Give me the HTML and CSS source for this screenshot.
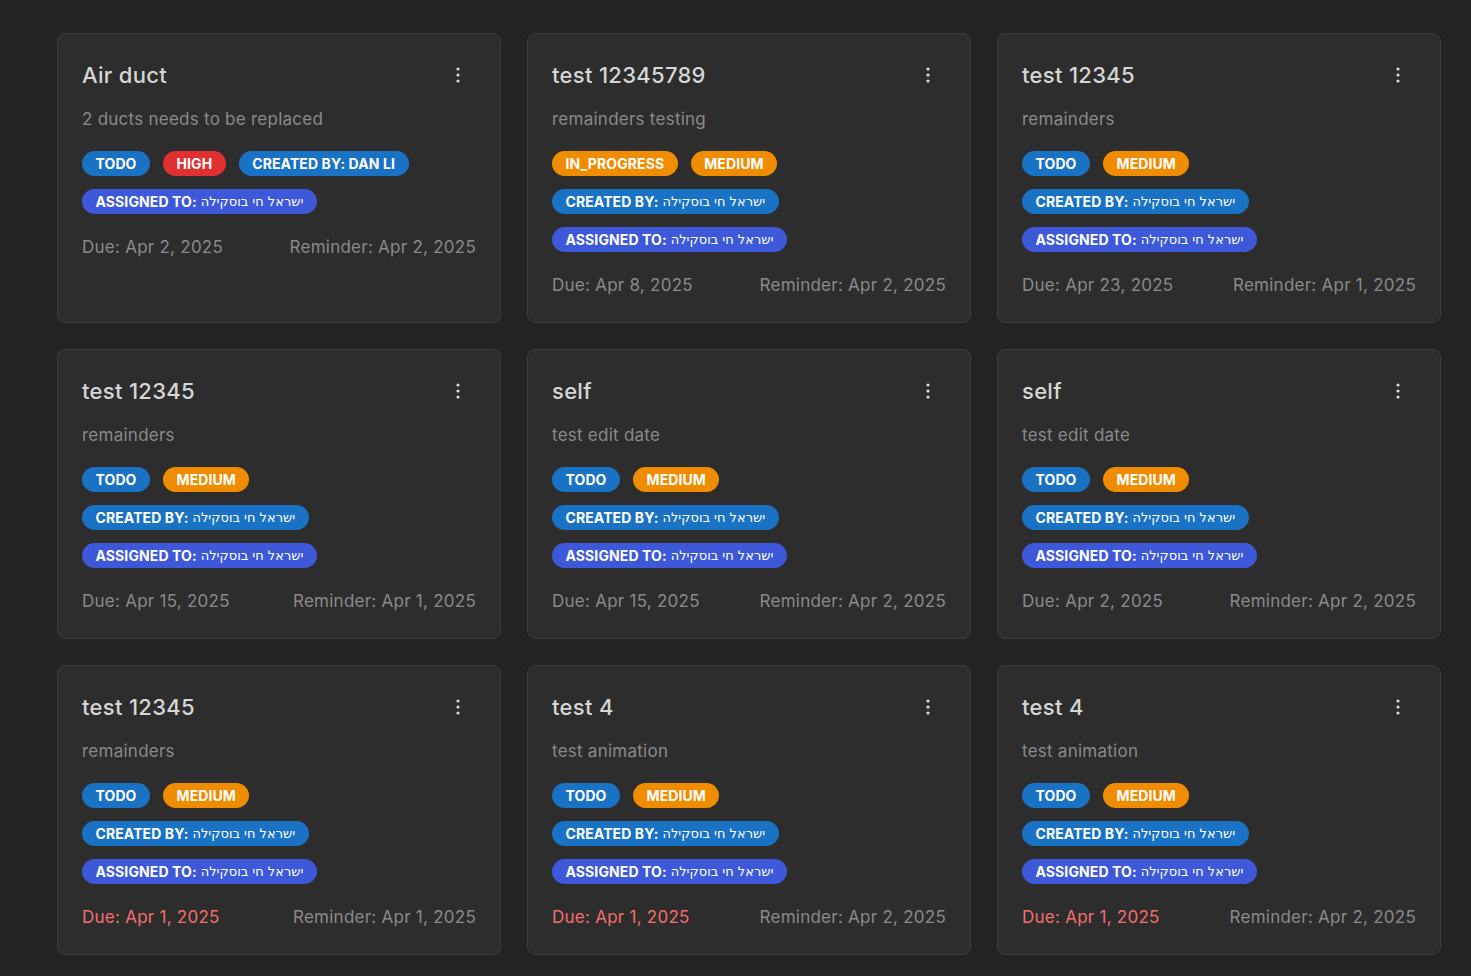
FILE: index.html
```html
<!DOCTYPE html>
<html lang="en">
<head>
<meta charset="utf-8">
<title>Tasks</title>
<link rel="stylesheet" href="styles.css">
</head>
<body>
<main class="grid">
  <article class="card">
    <header class="card-head"><h2 class="title">Air duct</h2><button class="menu" aria-label="menu"><svg width="4" height="16" viewBox="0 0 4 16"><circle cx="2" cy="2" r="1.6"/><circle cx="2" cy="8" r="1.6"/><circle cx="2" cy="14" r="1.6"/></svg></button></header>
    <p class="desc">2 ducts needs to be replaced</p>
    <div class="chips">
      <span class="chip blue">TODO</span><span class="chip red">HIGH</span><span class="chip blue">CREATED BY: DAN LI</span>
      <span class="chip indigo">ASSIGNED TO: <span class="he">ישראל חי בוסקילה</span></span>
    </div>
    <div class="dates"><span>Due: Apr 2, 2025</span><span>Reminder: Apr 2, 2025</span></div>
  </article>

  <article class="card">
    <header class="card-head"><h2 class="title">test 12345789</h2><button class="menu" aria-label="menu"><svg width="4" height="16" viewBox="0 0 4 16"><circle cx="2" cy="2" r="1.6"/><circle cx="2" cy="8" r="1.6"/><circle cx="2" cy="14" r="1.6"/></svg></button></header>
    <p class="desc">remainders testing</p>
    <div class="chips">
      <span class="chip orange">IN_PROGRESS</span><span class="chip orange">MEDIUM</span>
      <span class="chip blue">CREATED BY: <span class="he">ישראל חי בוסקילה</span></span>
      <span class="chip indigo">ASSIGNED TO: <span class="he">ישראל חי בוסקילה</span></span>
    </div>
    <div class="dates"><span>Due: Apr 8, 2025</span><span>Reminder: Apr 2, 2025</span></div>
  </article>

  <article class="card">
    <header class="card-head"><h2 class="title">test 12345</h2><button class="menu" aria-label="menu"><svg width="4" height="16" viewBox="0 0 4 16"><circle cx="2" cy="2" r="1.6"/><circle cx="2" cy="8" r="1.6"/><circle cx="2" cy="14" r="1.6"/></svg></button></header>
    <p class="desc">remainders</p>
    <div class="chips">
      <span class="chip blue">TODO</span><span class="chip orange">MEDIUM</span>
      <span class="chip blue">CREATED BY: <span class="he">ישראל חי בוסקילה</span></span>
      <span class="chip indigo">ASSIGNED TO: <span class="he">ישראל חי בוסקילה</span></span>
    </div>
    <div class="dates"><span>Due: Apr 23, 2025</span><span>Reminder: Apr 1, 2025</span></div>
  </article>

  <article class="card">
    <header class="card-head"><h2 class="title">test 12345</h2><button class="menu" aria-label="menu"><svg width="4" height="16" viewBox="0 0 4 16"><circle cx="2" cy="2" r="1.6"/><circle cx="2" cy="8" r="1.6"/><circle cx="2" cy="14" r="1.6"/></svg></button></header>
    <p class="desc">remainders</p>
    <div class="chips">
      <span class="chip blue">TODO</span><span class="chip orange">MEDIUM</span>
      <span class="chip blue">CREATED BY: <span class="he">ישראל חי בוסקילה</span></span>
      <span class="chip indigo">ASSIGNED TO: <span class="he">ישראל חי בוסקילה</span></span>
    </div>
    <div class="dates"><span>Due: Apr 15, 2025</span><span>Reminder: Apr 1, 2025</span></div>
  </article>

  <article class="card">
    <header class="card-head"><h2 class="title">self</h2><button class="menu" aria-label="menu"><svg width="4" height="16" viewBox="0 0 4 16"><circle cx="2" cy="2" r="1.6"/><circle cx="2" cy="8" r="1.6"/><circle cx="2" cy="14" r="1.6"/></svg></button></header>
    <p class="desc">test edit date</p>
    <div class="chips">
      <span class="chip blue">TODO</span><span class="chip orange">MEDIUM</span>
      <span class="chip blue">CREATED BY: <span class="he">ישראל חי בוסקילה</span></span>
      <span class="chip indigo">ASSIGNED TO: <span class="he">ישראל חי בוסקילה</span></span>
    </div>
    <div class="dates"><span>Due: Apr 15, 2025</span><span>Reminder: Apr 2, 2025</span></div>
  </article>

  <article class="card">
    <header class="card-head"><h2 class="title">self</h2><button class="menu" aria-label="menu"><svg width="4" height="16" viewBox="0 0 4 16"><circle cx="2" cy="2" r="1.6"/><circle cx="2" cy="8" r="1.6"/><circle cx="2" cy="14" r="1.6"/></svg></button></header>
    <p class="desc">test edit date</p>
    <div class="chips">
      <span class="chip blue">TODO</span><span class="chip orange">MEDIUM</span>
      <span class="chip blue">CREATED BY: <span class="he">ישראל חי בוסקילה</span></span>
      <span class="chip indigo">ASSIGNED TO: <span class="he">ישראל חי בוסקילה</span></span>
    </div>
    <div class="dates"><span>Due: Apr 2, 2025</span><span>Reminder: Apr 2, 2025</span></div>
  </article>

  <article class="card">
    <header class="card-head"><h2 class="title">test 12345</h2><button class="menu" aria-label="menu"><svg width="4" height="16" viewBox="0 0 4 16"><circle cx="2" cy="2" r="1.6"/><circle cx="2" cy="8" r="1.6"/><circle cx="2" cy="14" r="1.6"/></svg></button></header>
    <p class="desc">remainders</p>
    <div class="chips">
      <span class="chip blue">TODO</span><span class="chip orange">MEDIUM</span>
      <span class="chip blue">CREATED BY: <span class="he">ישראל חי בוסקילה</span></span>
      <span class="chip indigo">ASSIGNED TO: <span class="he">ישראל חי בוסקילה</span></span>
    </div>
    <div class="dates"><span class="overdue">Due: Apr 1, 2025</span><span>Reminder: Apr 1, 2025</span></div>
  </article>

  <article class="card">
    <header class="card-head"><h2 class="title">test 4</h2><button class="menu" aria-label="menu"><svg width="4" height="16" viewBox="0 0 4 16"><circle cx="2" cy="2" r="1.6"/><circle cx="2" cy="8" r="1.6"/><circle cx="2" cy="14" r="1.6"/></svg></button></header>
    <p class="desc">test animation</p>
    <div class="chips">
      <span class="chip blue">TODO</span><span class="chip orange">MEDIUM</span>
      <span class="chip blue">CREATED BY: <span class="he">ישראל חי בוסקילה</span></span>
      <span class="chip indigo">ASSIGNED TO: <span class="he">ישראל חי בוסקילה</span></span>
    </div>
    <div class="dates"><span class="overdue">Due: Apr 1, 2025</span><span>Reminder: Apr 2, 2025</span></div>
  </article>

  <article class="card">
    <header class="card-head"><h2 class="title">test 4</h2><button class="menu" aria-label="menu"><svg width="4" height="16" viewBox="0 0 4 16"><circle cx="2" cy="2" r="1.6"/><circle cx="2" cy="8" r="1.6"/><circle cx="2" cy="14" r="1.6"/></svg></button></header>
    <p class="desc">test animation</p>
    <div class="chips">
      <span class="chip blue">TODO</span><span class="chip orange">MEDIUM</span>
      <span class="chip blue">CREATED BY: <span class="he">ישראל חי בוסקילה</span></span>
      <span class="chip indigo">ASSIGNED TO: <span class="he">ישראל חי בוסקילה</span></span>
    </div>
    <div class="dates"><span class="overdue">Due: Apr 1, 2025</span><span>Reminder: Apr 2, 2025</span></div>
  </article>
</main>
</body>
</html>
```
FILE: styles.css
```css
* { box-sizing: border-box; }
html, body { height: 100%; }
body {
  margin: 0;
  background: #232323;
  font-family: Inter, "Noto Sans", "DejaVu Sans", sans-serif;
  color: #d4d4d4;
}
.grid {
  display: grid;
  grid-template-columns: repeat(3, 444px);
  column-gap: 26px;
  row-gap: 26px;
  padding: 33px 0 0 57px;
}
.card {
  background: #2d2d2d;
  border: 1px solid #3c3c3c;
  border-radius: 8px;
  padding: 23px 24px 25px 24px;
  display: flex;
  flex-direction: column;
}
.card-head {
  display: flex;
  align-items: center;
  justify-content: space-between;
  height: 36px;
}
.title {
  margin: 0;
  font-size: 22px;
  font-weight: 500;
  line-height: 36px;
  letter-spacing: 0.3px;
  color: #d6d6d6;
}
.menu {
  width: 36px;
  height: 36px;
  margin-right: 0;
  border: 0;
  background: transparent;
  padding: 0;
  display: flex;
  align-items: center;
  justify-content: center;
  fill: #dcdcdc;
}
.desc {
  margin: 14px 0 0 0;
  font-size: 17px;
  line-height: 24px;
  letter-spacing: 0.25px;
  color: #8a8a8a;
}
.chips {
  margin-top: 20px;
  display: flex;
  flex-wrap: wrap;
  column-gap: 13px;
  row-gap: 13px;
}
.chip {
  display: inline-flex;
  align-items: center;
  height: 25px;
  padding: 0 13.5px;
  border-radius: 13px;
  font-size: 14px;
  font-weight: 700;
  letter-spacing: 0.1px;
  color: #fff;
  white-space: nowrap;
}
.chip .he {
  font-family: "DejaVu Sans", sans-serif;
  font-weight: 400;
  font-size: 13px;
  letter-spacing: 0;
  margin-left: 4px;
}
.blue { background: #1a72c4; }
.red { background: #e0302f; }
.orange { background: #f08c00; }
.indigo { background: #3d59d9; }
.dates {
  margin-top: 21px;
  display: flex;
  justify-content: space-between;
  font-size: 17px;
  line-height: 24px;
  letter-spacing: 0.25px;
  color: #8a8a8a;
}
.overdue { color: #f46d6d; }
```
